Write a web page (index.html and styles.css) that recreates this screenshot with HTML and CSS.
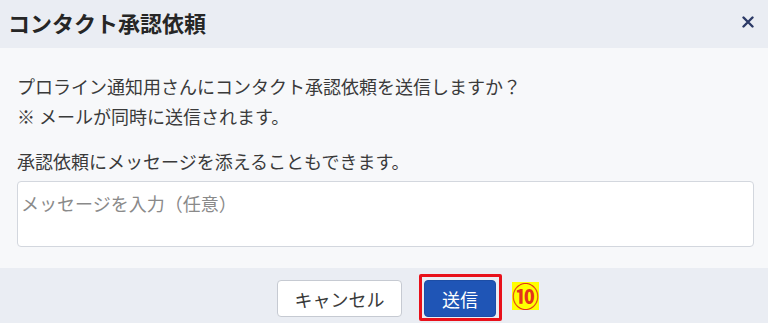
FILE: index.html
```html
<!DOCTYPE html>
<html lang="ja">
<head>
<meta charset="utf-8">
<title>コンタクト承認依頼</title>
<link rel="stylesheet" href="styles.css">
</head>
<body>
<div class="dialog">
  <div class="header">
    <h1 class="title">コンタクト承認依頼</h1>
    <button class="close" aria-label="閉じる">
      <svg width="12" height="12" viewBox="0 0 12 12"><path d="M1.5 1.5 L10.5 10.5 M10.5 1.5 L1.5 10.5" stroke="#2c3a66" stroke-width="2.4" stroke-linecap="round"/></svg>
    </button>
  </div>
  <div class="body">
    <p class="line">プロライン通知用さんにコンタクト承認依頼を送信しますか？</p>
    <p class="line">※ メールが同時に送信されます。</p>
    <p class="line lead">承認依頼にメッセージを添えることもできます。</p>
    <textarea class="message" placeholder="メッセージを入力（任意）"></textarea>
  </div>
  <div class="footer">
    <div class="actions">
      <button class="btn cancel">キャンセル</button>
      <button class="btn send">送信</button>
      <span class="mark">⑩</span>
    </div>
  </div>
</div>
</body>
</html>
```
FILE: styles.css
```css
* { box-sizing: border-box; }
html, body { margin: 0; padding: 0; }
body {
  width: 768px;
  height: 323px;
  overflow: hidden;
  font-family: "Noto Sans CJK JP", "Noto Sans", sans-serif;
  color: #333;
  background: #f7f8fa;
}
.dialog { width: 768px; height: 323px; display: flex; flex-direction: column; }
.header {
  height: 48px;
  background: #eaedf3;
  display: flex;
  align-items: center;
  justify-content: space-between;
  padding: 0 14px 0 8px;
}
.title {
  margin: 0;
  font-size: 22px;
  font-weight: 700;
  color: #262626;
  line-height: 1;
  margin-top: -4px;
}
.close {
  border: 0;
  background: none;
  padding: 0;
  width: 12px;
  height: 12px;
  display: flex;
  margin-top: -4px;
}
.body {
  height: 220px;
  background: #f7f8fa;
  padding: 23px 14px 0 17px;
  display: flex;
  flex-direction: column;
}
.line {
  margin: 0;
  font-size: 18px;
  line-height: 30px;
  color: #3a3a3a;
  white-space: nowrap;
}
.lead { margin-top: 15px; }
.message {
  margin-top: 5px;
  width: 737px;
  height: 66px;
  border: 1px solid #d3d7de;
  border-radius: 4px;
  background: #fff;
  padding: 9px 3px;
  font-family: inherit;
  font-size: 18px;
  line-height: 24px;
  resize: none;
  color: #333;
}
.message::placeholder { color: #8a8a8a; }
.footer {
  flex: 1;
  background: #eaedf3;
  display: flex;
  justify-content: center;
  padding-top: 12px;
}
.actions {
  position: relative;
  display: flex;
  gap: 22px;
  height: 37px;
  margin-left: 5px;
}
.btn {
  height: 37px;
  font-family: inherit;
  font-size: 18px;
  border-radius: 4px;
  padding: 0;
  line-height: 1;
}
.cancel {
  width: 125px;
  background: #fff;
  border: 1px solid #c6cad2;
  color: #3a3a3a;
}
.send {
  position: relative;
  width: 72px;
  background: #1f55b6;
  border: 1px solid #1c4da6;
  color: #fff;
}
.send::after {
  content: "";
  position: absolute;
  left: -6px;
  right: -7px;
  top: -7px;
  bottom: -5px;
  border: 3px solid #e8101a;
  border-radius: 2px;
}
.mark {
  position: absolute;
  left: 235px;
  top: 2px;
  width: 27px;
  height: 28px;
  background: #ffff00;
  color: #e3331c;
  font-size: 27px;
  font-weight: 700;
  line-height: 28px;
  text-align: center;
  white-space: nowrap;
  display: flex;
  align-items: center;
  justify-content: center;
}
```
